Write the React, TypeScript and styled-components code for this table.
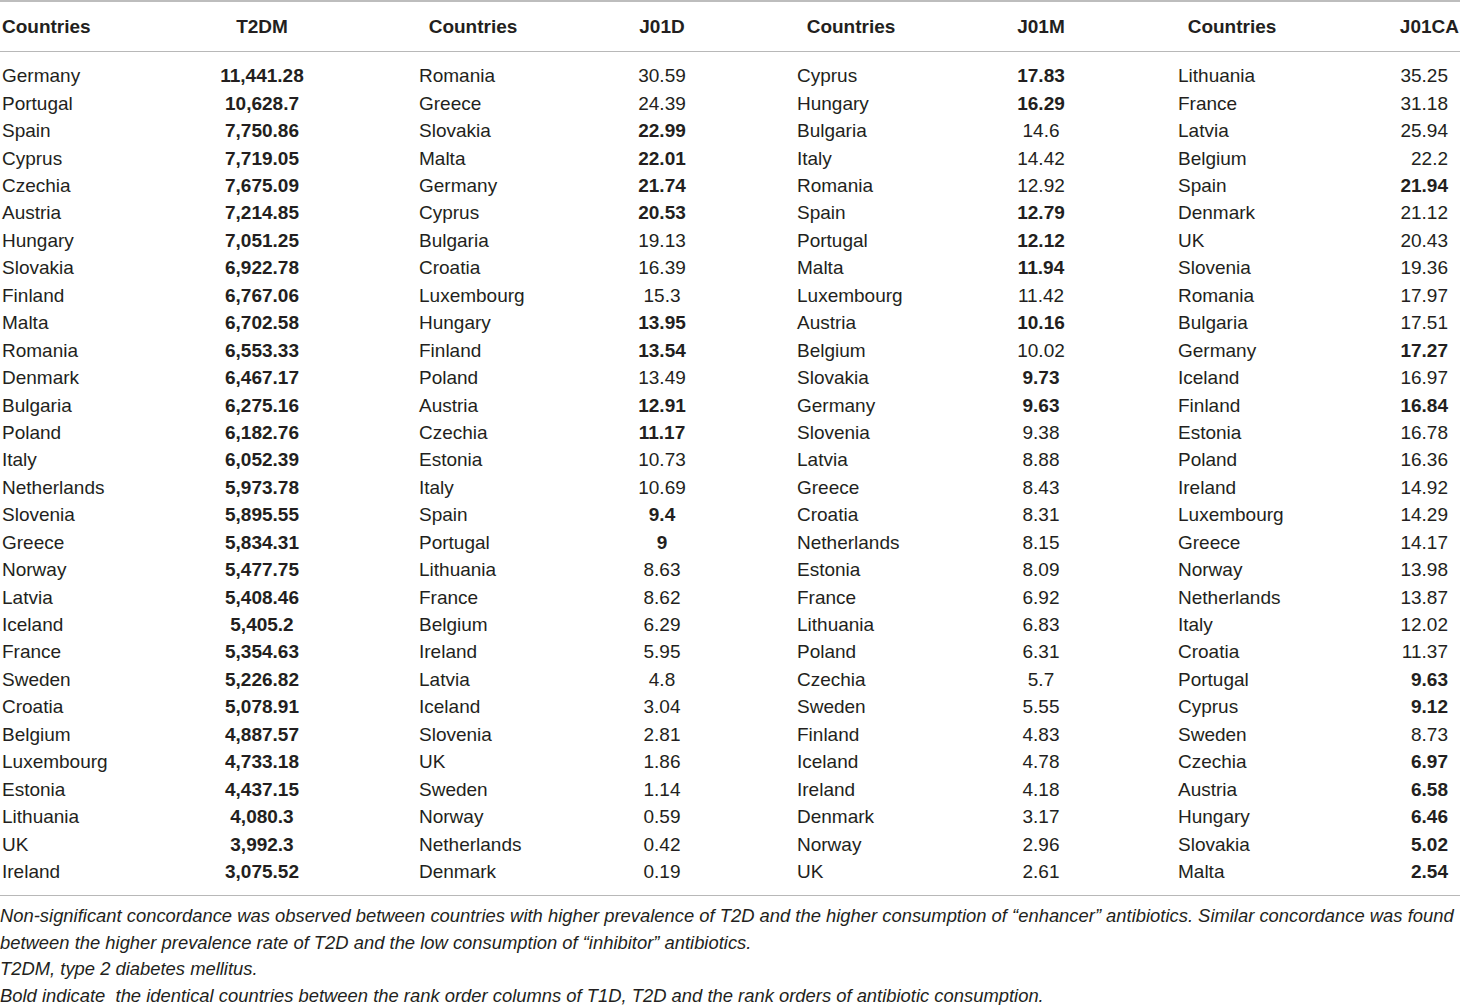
import React from "react";
import styled, { createGlobalStyle } from "styled-components";

const Global = createGlobalStyle`
  html, body { margin: 0; padding: 0; background: #ffffff; }
  body { font-family: "Liberation Sans", Arial, sans-serif; color: #231f20; }
`;

type Row = [string, string, boolean];

const t2dm: Row[] = [
  ["Germany", "11,441.28", true], ["Portugal", "10,628.7", true], ["Spain", "7,750.86", true],
  ["Cyprus", "7,719.05", true], ["Czechia", "7,675.09", true], ["Austria", "7,214.85", true],
  ["Hungary", "7,051.25", true], ["Slovakia", "6,922.78", true], ["Finland", "6,767.06", true],
  ["Malta", "6,702.58", true], ["Romania", "6,553.33", true], ["Denmark", "6,467.17", true],
  ["Bulgaria", "6,275.16", true], ["Poland", "6,182.76", true], ["Italy", "6,052.39", true],
  ["Netherlands", "5,973.78", true], ["Slovenia", "5,895.55", true], ["Greece", "5,834.31", true],
  ["Norway", "5,477.75", true], ["Latvia", "5,408.46", true], ["Iceland", "5,405.2", true],
  ["France", "5,354.63", true], ["Sweden", "5,226.82", true], ["Croatia", "5,078.91", true],
  ["Belgium", "4,887.57", true], ["Luxembourg", "4,733.18", true], ["Estonia", "4,437.15", true],
  ["Lithuania", "4,080.3", true], ["UK", "3,992.3", true], ["Ireland", "3,075.52", true],
];

const j01d: Row[] = [
  ["Romania", "30.59", false], ["Greece", "24.39", false], ["Slovakia", "22.99", true],
  ["Malta", "22.01", true], ["Germany", "21.74", true], ["Cyprus", "20.53", true],
  ["Bulgaria", "19.13", false], ["Croatia", "16.39", false], ["Luxembourg", "15.3", false],
  ["Hungary", "13.95", true], ["Finland", "13.54", true], ["Poland", "13.49", false],
  ["Austria", "12.91", true], ["Czechia", "11.17", true], ["Estonia", "10.73", false],
  ["Italy", "10.69", false], ["Spain", "9.4", true], ["Portugal", "9", true],
  ["Lithuania", "8.63", false], ["France", "8.62", false], ["Belgium", "6.29", false],
  ["Ireland", "5.95", false], ["Latvia", "4.8", false], ["Iceland", "3.04", false],
  ["Slovenia", "2.81", false], ["UK", "1.86", false], ["Sweden", "1.14", false],
  ["Norway", "0.59", false], ["Netherlands", "0.42", false], ["Denmark", "0.19", false],
];

const j01m: Row[] = [
  ["Cyprus", "17.83", true], ["Hungary", "16.29", true], ["Bulgaria", "14.6", false],
  ["Italy", "14.42", false], ["Romania", "12.92", false], ["Spain", "12.79", true],
  ["Portugal", "12.12", true], ["Malta", "11.94", true], ["Luxembourg", "11.42", false],
  ["Austria", "10.16", true], ["Belgium", "10.02", false], ["Slovakia", "9.73", true],
  ["Germany", "9.63", true], ["Slovenia", "9.38", false], ["Latvia", "8.88", false],
  ["Greece", "8.43", false], ["Croatia", "8.31", false], ["Netherlands", "8.15", false],
  ["Estonia", "8.09", false], ["France", "6.92", false], ["Lithuania", "6.83", false],
  ["Poland", "6.31", false], ["Czechia", "5.7", false], ["Sweden", "5.55", false],
  ["Finland", "4.83", false], ["Iceland", "4.78", false], ["Ireland", "4.18", false],
  ["Denmark", "3.17", false], ["Norway", "2.96", false], ["UK", "2.61", false],
];

const j01ca: Row[] = [
  ["Lithuania", "35.25", false], ["France", "31.18", false], ["Latvia", "25.94", false],
  ["Belgium", "22.2", false], ["Spain", "21.94", true], ["Denmark", "21.12", false],
  ["UK", "20.43", false], ["Slovenia", "19.36", false], ["Romania", "17.97", false],
  ["Bulgaria", "17.51", false], ["Germany", "17.27", true], ["Iceland", "16.97", false],
  ["Finland", "16.84", true], ["Estonia", "16.78", false], ["Poland", "16.36", false],
  ["Ireland", "14.92", false], ["Luxembourg", "14.29", false], ["Greece", "14.17", false],
  ["Norway", "13.98", false], ["Netherlands", "13.87", false], ["Italy", "12.02", false],
  ["Croatia", "11.37", false], ["Portugal", "9.63", true], ["Cyprus", "9.12", true],
  ["Sweden", "8.73", false], ["Czechia", "6.97", true], ["Austria", "6.58", true],
  ["Hungary", "6.46", true], ["Slovakia", "5.02", true], ["Malta", "2.54", true],
];

type Group = {
  name: string;
  data: Row[];
  pad: number;
  centerHead: boolean;
  align: "center" | "right";
  valPad: number;
  headPad: number;
};

const groups: Group[] = [
  { name: "T2DM", data: t2dm, pad: 2, centerHead: false, align: "center", valPad: 0, headPad: 0 },
  { name: "J01D", data: j01d, pad: 85, centerHead: true, align: "center", valPad: 0, headPad: 0 },
  { name: "J01M", data: j01m, pad: 53, centerHead: true, align: "center", valPad: 0, headPad: 0 },
  { name: "J01CA", data: j01ca, pad: 56, centerHead: true, align: "right", valPad: 12, headPad: 1 },
];

const Page = styled.main`
  width: 1460px;
`;

const GridRow = styled.div<{ $h: number }>`
  display: grid;
  grid-template-columns: 190px 144px 246px 164px 216px 162px 270px 68px;
  height: ${(p) => p.$h}px;
  align-items: center;
  font-size: 19px;
  line-height: ${(p) => p.$h}px;
  white-space: nowrap;
`;

const Head = styled.div`
  border-top: 2px solid #bdbdbd;
  border-bottom: 1px solid #b8b8b8;
`;

const Body = styled.div`
  padding: 10.3px 0 9.2px;
  border-bottom: 1px solid #b8b8b8;
`;

const HeadCountry = styled.div<{ $pad: number; $center: boolean }>`
  font-weight: 700;
  justify-self: start;
  box-sizing: border-box;
  padding-left: ${(p) => p.$pad}px;
  width: ${(p) => (p.$center ? p.$pad + 108 : 190)}px;
  text-align: ${(p) => (p.$center ? "center" : "left")};
`;

const HeadValue = styled.div<{ $align: string; $pad: number }>`
  font-weight: 700;
  text-align: ${(p) => p.$align};
  padding-right: ${(p) => p.$pad}px;
`;

const Country = styled.div<{ $pad: number }>`
  padding-left: ${(p) => p.$pad}px;
`;

const Value = styled.div<{ $align: string; $pad: number; $bold: boolean }>`
  text-align: ${(p) => p.$align};
  padding-right: ${(p) => p.$pad}px;
  font-weight: ${(p) => (p.$bold ? 700 : 400)};
`;

const Notes = styled.div`
  padding-top: 7.5px;
  font-size: 18.4px;
  font-style: italic;
  line-height: 26.6px;
  white-space: nowrap;
`;

export default function App() {
  const rows = Array.from({ length: 30 }, (_, i) => i);
  return (
    <>
      <Global />
      <Page>
        <Head>
          <GridRow $h={49}>
            {groups.map((g) => (
              <React.Fragment key={g.name}>
                <HeadCountry $pad={g.pad} $center={g.centerHead}>Countries</HeadCountry>
                <HeadValue $align={g.align === "right" ? "right" : "center"} $pad={g.headPad}>
                  {g.name}
                </HeadValue>
              </React.Fragment>
            ))}
          </GridRow>
        </Head>
        <Body>
          {rows.map((i) => (
            <GridRow key={i} $h={27.45}>
              {groups.map((g) => {
                const [c, v, b] = g.data[i];
                return (
                  <React.Fragment key={g.name}>
                    <Country $pad={g.pad}>{c}</Country>
                    <Value $align={g.align} $pad={g.valPad} $bold={b}>{v}</Value>
                  </React.Fragment>
                );
              })}
            </GridRow>
          ))}
        </Body>
        <Notes>
          Non-significant concordance was observed between countries with higher prevalence of T2D and the higher consumption of “enhancer” antibiotics. Similar concordance was found
          <br />
          between the higher prevalence rate of T2D and the low consumption of “inhibitor” antibiotics.
          <br />
          T2DM, type 2 diabetes mellitus.
          <br />
          Bold indicate&nbsp; the identical countries between the rank order columns of T1D, T2D and the rank orders of antibiotic consumption.
        </Notes>
      </Page>
    </>
  );
}
